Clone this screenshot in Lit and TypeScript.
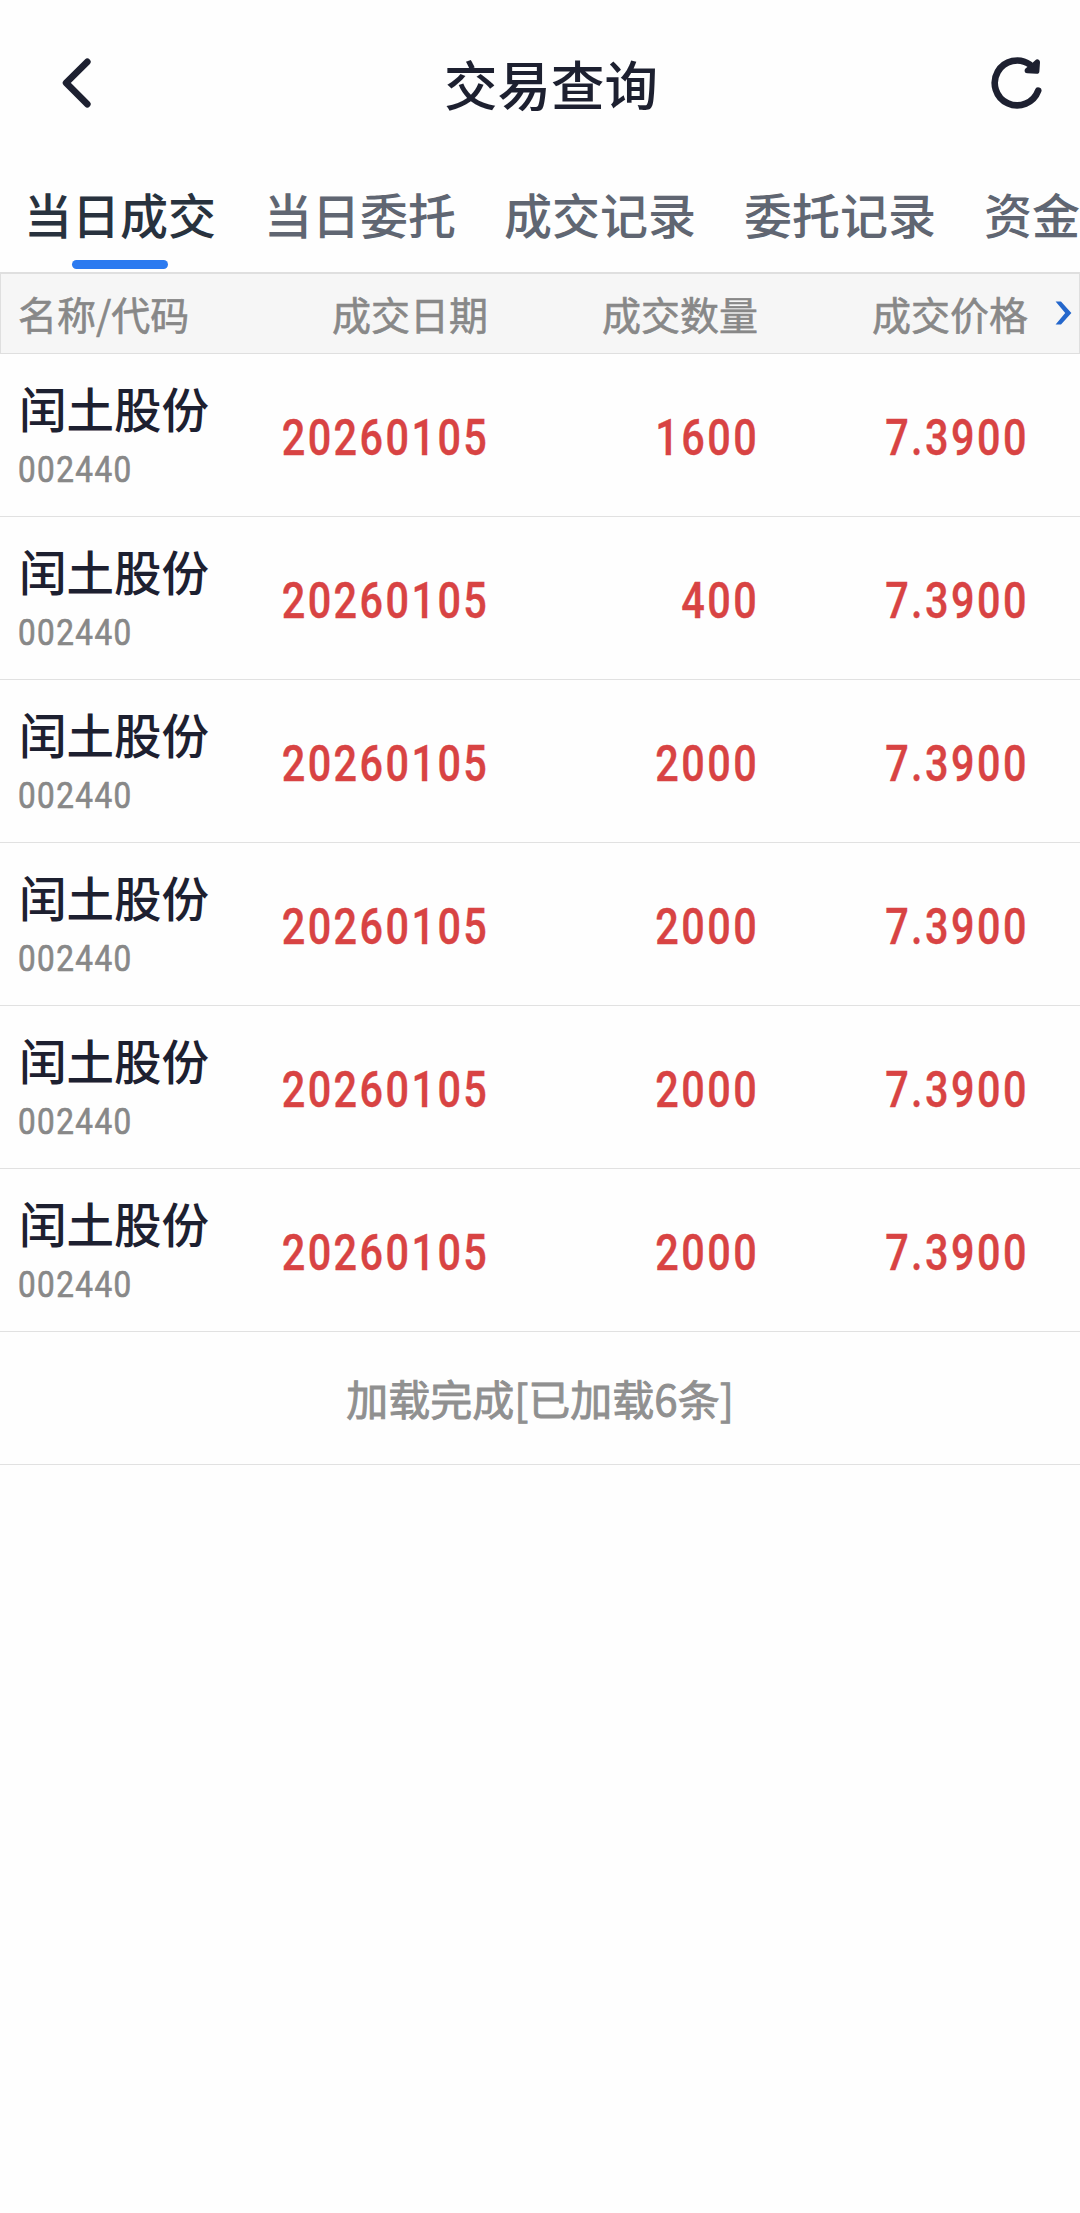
import { LitElement, html, css } from "lit";
import { customElement, property, state } from "lit/decorators.js";
import { classMap } from "lit/directives/class-map.js";

interface Trade {
  name: string;
  code: string;
  date: string;
  amount: string;
  price: string;
}

const trade = (amount: string): Trade => ({
  name: "闰土股份",
  code: "002440",
  date: "20260105",
  amount,
  price: "7.3900",
});

@customElement("trade-row")
export class TradeRow extends LitElement {
  @property({ attribute: false }) trade!: Trade;

  static styles = css`
    :host {
      box-sizing: border-box;
      height: 163px;
      border-bottom: 1px solid #e1e1e1;
      display: grid;
      grid-template-columns: 218px 270px 270px 270px;
      align-items: center;
    }
    .stock {
      padding-left: 19px;
      padding-top: 3px;
      display: flex;
      flex-direction: column;
      align-items: flex-start;
    }
    .name {
      font-size: 47.5px;
      line-height: 60px;
      font-weight: 500;
      color: #1d2030;
      white-space: nowrap;
    }
    .code {
      margin-top: 7px;
      margin-left: -1px;
      font-family: Roboto, "Noto Sans CJK SC", sans-serif;
      font-size: 36.5px;
      line-height: 50px;
      letter-spacing: 1.7px;
      color: #888;
      -webkit-text-stroke: 0.7px #888;
      transform: scaleX(0.86);
      transform-origin: left center;
    }
    .num {
      justify-self: end;
      padding-top: 5px;
      margin-right: -1px;
      font-family: Roboto, "Noto Sans CJK SC", sans-serif;
      font-size: 49.5px;
      line-height: 60px;
      font-weight: 500;
      letter-spacing: 2.9px;
      color: #d84343;
      -webkit-text-stroke: 0.4px #d84343;
      transform: scaleX(0.836);
      transform-origin: right center;
    }
  `;

  render() {
    const t = this.trade;
    return html`
      <div class="stock">
        <span class="name">${t.name}</span>
        <span class="code">${t.code}</span>
      </div>
      <span class="num">${t.date}</span>
      <span class="num">${t.amount}</span>
      <span class="num">${t.price}</span>
    `;
  }
}

@customElement("app-root")
export class AppRoot extends LitElement {
  @state() private active = 0;

  private tabs = ["当日成交", "当日委托", "成交记录", "委托记录", "资金"];
  private columns = ["名称/代码", "成交日期", "成交数量", "成交价格"];
  private trades = ["1600", "400", "2000", "2000", "2000", "2000"].map(trade);

  static styles = css`
    :host {
      display: block;
      width: 1080px;
      height: 2213px;
      overflow: hidden;
      background: #fefefe;
      font-family: "Noto Sans CJK SC", sans-serif;
    }
    .bar {
      height: 166px;
      display: grid;
      grid-template-columns: 110px 1fr 90px;
    }
    .icon {
      display: block;
      width: 64px;
      height: 64px;
      margin-top: 50px;
    }
    .back {
      margin-left: 46px;
    }
    .refresh {
      margin-left: -5px;
    }
    .title {
      margin: 0;
      padding-top: 43px;
      padding-left: 2px;
      text-align: center;
      font-size: 53.5px;
      line-height: 80px;
      font-weight: 500;
      color: #1d2030;
    }
    .tabs {
      height: 106px;
      display: flex;
    }
    .tab {
      flex: 0 0 240px;
      display: flex;
      flex-direction: column;
      padding-top: 12px;
      padding-left: 24px;
      box-sizing: border-box;
      font-size: 48px;
      line-height: 70px;
      font-weight: 500;
      color: #606672;
      white-space: nowrap;
    }
    .tab:last-child {
      flex-basis: 120px;
    }
    .tab.active {
      color: #28323e;
    }
    .tab.active::after {
      content: "";
      width: 96px;
      height: 9px;
      margin-top: 12px;
      margin-left: 48px;
      border-radius: 5px;
      background: #2b7af0;
    }
    .head {
      box-sizing: border-box;
      height: 82px;
      border: 1px solid #dfdfdf;
      border-top-width: 2px;
      background: #f6f6f6;
      display: grid;
      grid-template-columns: 217px 270px 270px 270px 1fr;
      align-items: center;
      font-size: 39px;
      line-height: 56px;
      color: #888;
      -webkit-text-stroke: 0.6px #888;
    }
    .col {
      text-align: right;
      white-space: nowrap;
      padding-bottom: 2px;
    }
    .col:first-child {
      text-align: left;
      padding-left: 17px;
    }
    .more {
      display: block;
      margin-left: 27px;
      margin-bottom: 2px;
      width: 18px;
      height: 24px;
    }
    .done {
      box-sizing: border-box;
      height: 133px;
      padding-bottom: 1px;
      border-bottom: 1px solid #e1e1e1;
      display: flex;
      align-items: center;
      justify-content: center;
      font-size: 42px;
      color: #909090;
      -webkit-text-stroke: 0.9px #909090;
    }
  `;

  render() {
    return html`
      <header class="bar">
        <svg class="icon back" viewBox="0 0 64 64" fill="none" stroke="#1d2030" stroke-width="6.7" stroke-linecap="round" stroke-linejoin="round">
          <path d="M41.3 11.8 20.1 32.8 41.3 54.2" />
        </svg>
        <h1 class="title">交易查询</h1>
        <svg class="icon refresh" viewBox="0 0 64 64" fill="none" stroke="#1d2030" stroke-width="6.6" stroke-linecap="round" stroke-linejoin="round">
          <path d="M53.2 40.6A22.4 22.4 0 1 1 45 14.6" />
          <path d="M52.2 12.2 51.6 21 42.4 20.4 47 17Z" fill="#1d2030" stroke-width="5.6" />
        </svg>
      </header>
      <nav class="tabs">
        ${this.tabs.map(
          (t, i) => html`<div class=${classMap({ tab: true, active: i === this.active })} @click=${() => (this.active = i)}>${t}</div>`
        )}
      </nav>
      <div class="head">
        ${this.columns.map((c) => html`<span class="col">${c}</span>`)}
        <svg class="more" viewBox="0 0 18 24" fill="#2467cc">
          <path d="M0.6 0.6H6L16.4 12 6 23.4H0.6L10.2 12Z" />
        </svg>
      </div>
      ${this.trades.map((t) => html`<trade-row .trade=${t}></trade-row>`)}
      <div class="done">加载完成[已加载${this.trades.length}条]</div>
    `;
  }
}
